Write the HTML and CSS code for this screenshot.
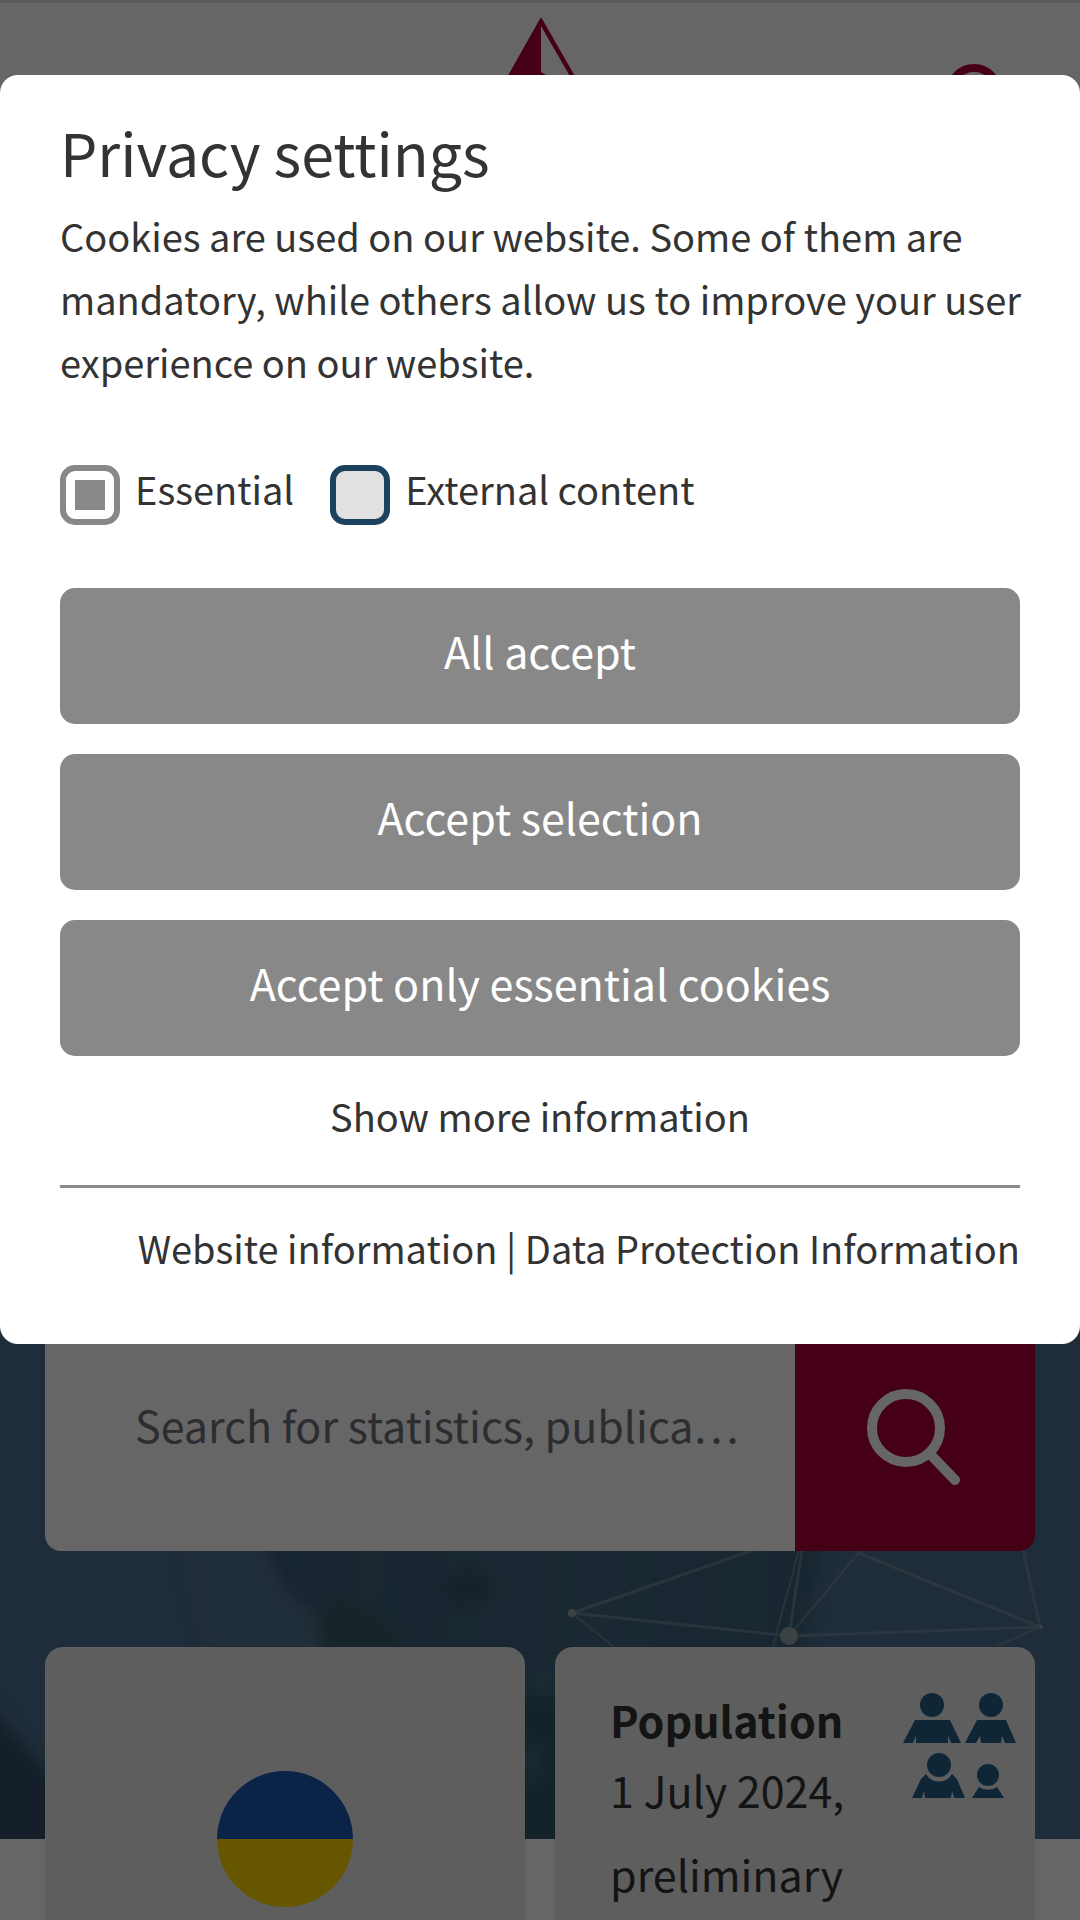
FILE: index.html
```html
<!DOCTYPE html>
<html lang="en">
<head>
<meta charset="utf-8">
<meta name="viewport" content="width=device-width, initial-scale=1">
<title>Privacy settings</title>
<link rel="stylesheet" href="styles.css">
</head>
<body>
<div class="page">
  <header class="header">
    <span></span>
    <a class="logo" href="#" aria-label="Home">
      <svg width="120" height="120" viewBox="0 0 120 120" aria-hidden="true">
        <path fill="#af0037" fill-rule="evenodd" d="M61 -1 L119 100 L61 112 L4 100 Z M61 8 V54 L68 58 L99 74 Z"/>
      </svg>
    </a>
    <button class="header-search" type="button" aria-label="Open search">
      <svg width="60" height="60" viewBox="0 0 60 60" fill="none" stroke="#af0037" stroke-width="8" aria-hidden="true">
        <circle cx="28" cy="28" r="24"/><path d="M45 45 L56 56" stroke-linecap="round"/>
      </svg>
    </button>
  </header>
  <main>
    <section class="hero">
      <svg class="hero-art" viewBox="0 0 1080 500" preserveAspectRatio="xMidYMax slice" aria-hidden="true">
        <defs>
          <filter id="soft" x="-20%" y="-20%" width="140%" height="140%" color-interpolation-filters="sRGB"><feGaussianBlur stdDeviation="7"/></filter>
          <linearGradient id="shade"><stop offset="0" stop-color="#3a5b78"/><stop offset=".6" stop-color="#44657f"/><stop offset="1" stop-color="#3d5f7a"/></linearGradient>
        </defs>
        <g filter="url(#soft)">
          <path fill="#52738f" d="M180 190 L250 190 L320 270 L320 330 L210 330 Z"/>
          <path fill="url(#shade)" d="M258 190 H825 L800 330 L560 500 H320 V310 L316 275 L285 250 Z"/>
          <path fill="#3b5d68" d="M322 268 L345 258 L398 290 L402 330 L322 330 Z"/>
          <path fill="#35556f" d="M440 245 L465 232 L490 240 L485 262 L450 265 Z"/>
          <path fill="#48697f" d="M368 190 L382 190 L374 265 L362 260 Z"/>
          <path fill="#34596a" d="M500 355 H570 V520 H500 Z"/>
          <path fill="#456882" d="M535 330 H550 V358 H535 Z M526 405 H540 V440 H526 Z"/>
          <path fill="#324f66" d="M-20 360 L10 390 L40 425 L60 440 V520 H-20 Z"/>
        </g>
        <g fill="none" stroke="#8aa0ab" stroke-width="3" opacity=".5">
          <path d="M572 274 L754 211 M572 274 L789 297 L1040 288 L854 212 M789 297 L802 211 M1040 288 L1023 211"/>
          <path stroke-width="2" d="M773 307 L799 211 M789 297 L861 211 M572 274 L613 307 M1040 288 L997 307"/>
        </g>
        <g fill="#97a6aa"><circle cx="572" cy="274" r="4"/><circle cx="789" cy="297" r="9"/><circle cx="1041" cy="288" r="2"/></g>
      </svg>
      <form class="search" role="search">
        <input type="text" aria-label="Search" placeholder="Search for statistics, publications and more">
        <button type="button" aria-label="Search">
          <svg width="98" height="98" viewBox="0 0 98 98" fill="none" stroke="#fff" stroke-width="10" aria-hidden="true">
            <circle cx="40" cy="40" r="34"/><path d="M65 67 L89 92" stroke-linecap="round"/>
          </svg>
        </button>
      </form>
    </section>
    <section class="cards">
      <article class="card card-flag">
        <svg width="136" height="136" viewBox="0 0 136 136" role="img" aria-label="Flag of Ukraine">
          <path fill="#1c58af" d="M0 68 A68 68 0 0 1 136 68 Z"/><path fill="#ffd700" d="M0 68 A68 68 0 0 0 136 68 Z"/>
        </svg>
      </article>
      <article class="card card-stat">
        <div class="stat-text">
          <h2>Population</h2>
          <p>1 July 2024, preliminary</p>
        </div>
        <svg class="people" width="114" height="108" viewBox="0 0 114 108" fill="#235f87" aria-hidden="true">
          <circle cx="29" cy="12" r="12"/><path d="M12 27 H47 L58 50 H48 L45 43 V50 H13 V43 L10 50 H0 Z"/>
          <circle cx="88" cy="12" r="12"/><path d="M74 27 H103 L113 50 H102 L99 43 L98 50 H78 L77 43 L73 50 H62 Z"/>
          <circle cx="36" cy="72" r="12"/><path d="M23 81 A15 15 0 0 0 49 81 L54 86 L62 105 H51 L49 98 L48 105 H22 L21 98 L19 105 H9 L18 86 Z"/>
          <circle cx="85" cy="82" r="11"/><path d="M76 94 A16 16 0 0 0 94 94 L101 105 H69 Z"/>
        </svg>
      </article>
    </section>
  </main>
</div>

<div class="overlay">
  <div class="dialog" role="dialog" aria-modal="true" aria-labelledby="dialog-title">
    <h1 id="dialog-title">Privacy settings</h1>
    <p class="intro">Cookies are used on our website. Some of them are mandatory, while others allow us to improve your user experience on our website.</p>
    <div class="options">
      <label class="option"><input type="checkbox" checked disabled><span>Essential</span></label>
      <label class="option"><input type="checkbox"><span>External content</span></label>
    </div>
    <div class="actions">
      <button type="button">All accept</button>
      <button type="button">Accept selection</button>
      <button type="button">Accept only essential cookies</button>
    </div>
    <a class="more" href="#">Show more information</a>
    <div class="legal"><a href="#">Website information</a> | <a href="#">Data Protection Information</a></div>
  </div>
</div>
</body>
</html>
```
FILE: styles.css
```css
* { box-sizing: border-box; }

body {
  margin: 0;
  height: 100vh;
  overflow: hidden;
  background: #fff;
  color: #333;
  font-family: "Noto Sans CJK KR", "Noto Sans", sans-serif;
  font-size: 38px;
}

h1, h2, p { margin: 0; font-weight: 400; }
a { color: inherit; text-decoration: none; }
button, input { font: inherit; }
button { border: 0; padding: 0; cursor: pointer; }

.header {
  display: grid;
  grid-template-columns: 1fr auto 1fr;
  align-items: start;
  height: 240px;
  padding: 15px 74px 0;
  border-top: 3px solid #e1e1e1;
}
.header svg { display: block; }
.header-search {
  justify-self: end;
  margin-top: 46px;
  background: none;
}

.hero {
  position: relative;
  padding: 1063px 45px 288px;
  background: #4d7090;
}
.hero-art {
  position: absolute;
  left: 0;
  bottom: 0;
  width: 100%;
  height: 500px;
}

.search {
  position: relative;
  display: flex;
  height: 248px;
  border-radius: 16px;
  overflow: hidden;
}
.search input {
  flex: 1;
  min-width: 0;
  border: 0;
  padding: 0 54px 6px 90px;
  background: #fff;
  color: #6c7278;
  font-size: 43px;
  font-variant-east-asian: proportional-width;
  text-overflow: ellipsis;
}
.search input::placeholder { color: #6c7278; opacity: 1; }
.search button {
  display: grid;
  place-items: center;
  width: 240px;
  padding-top: 20px;
  background: #af0037;
}

.cards {
  position: relative;
  display: grid;
  grid-template-columns: 1fr 1fr;
  gap: 30px;
  margin-top: -192px;
  padding: 0 45px;
}
.card {
  display: flex;
  min-height: 384px;
  border-radius: 18px;
  background: #ebebeb;
}
.card-flag { align-items: center; justify-content: center; }
.card-stat {
  align-items: flex-start;
  justify-content: space-between;
  padding: 44px 18px 44px 55px;
  color: #333;
}
.stat-text { width: 250px; font-size: 43px; line-height: 84px; }
.stat-text h2 { font-size: 43px; font-weight: 700; line-height: 56px; }
.people { margin-top: 2px; }

.overlay {
  position: fixed;
  inset: 0;
  display: flex;
  flex-direction: column;
  padding-top: 75px;
  background: rgba(0, 0, 0, .6);
}
.dialog {
  padding: 43px 60px 64px;
  border-radius: 18px;
  background: #fff;
}
.dialog h1 { font-size: 59px; line-height: 68px; }
.intro { margin: 18px -10px 0 0; line-height: 63px; }

.options { display: flex; gap: 36px; margin-top: 72px; }
.option { display: flex; gap: 15px; line-height: 48px; }
.option input {
  appearance: none;
  width: 60px;
  height: 60px;
  margin: 0;
  border: 6px solid #1c435d;
  border-radius: 15px;
  background: #e1e1e1;
}
.option input:checked {
  border-color: #888;
  background: #888;
  background-clip: content-box;
  padding: 9px;
}

.actions { display: grid; gap: 30px; margin-top: 63px; }
.actions button {
  height: 136px;
  padding-bottom: 12px;
  border-radius: 15px;
  background: #888;
  color: #fff;
  font-size: 43px;
}

.more { display: block; margin-top: 28px; line-height: 64px; text-align: center; }
.legal {
  margin-top: 37px;
  padding-top: 28px;
  border-top: 3px solid #888;
  line-height: 64px;
  text-align: right;
}
```
